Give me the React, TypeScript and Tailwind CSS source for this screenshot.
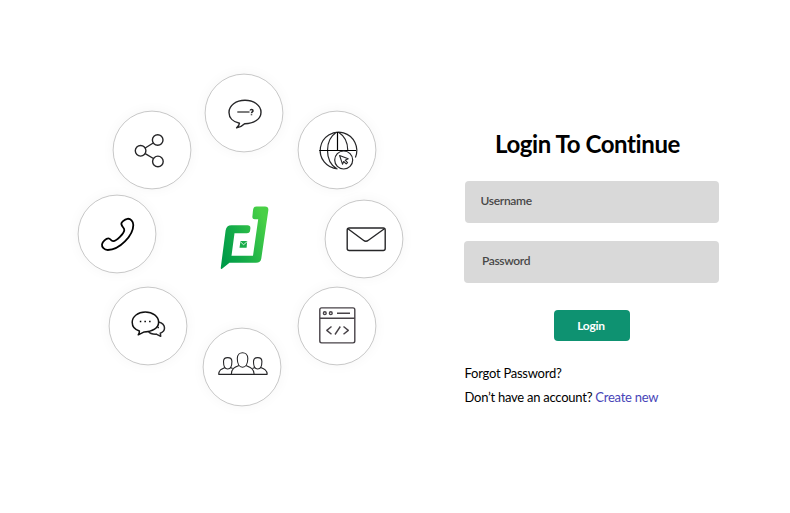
import type { ReactNode } from "react";

type Channel = { name: string; cx: number; cy: number; art: ReactNode };

const channels: Channel[] = [
  {
    name: "Question",
    cx: 244,
    cy: 113,
    art: (
      <>
        <path d="M239.5 123.2C233 122 229 117.700 229 112.400C229 105.500 236 100.300 245 100.300C254 100.300 261 105.500 261 112.200C261 119 254 123.800 244.600 123.700C242.300 126 239.600 127.300 236.600 127.900C238.300 126.500 239.300 125 239.500 123.200Z" />
        <path d="M237.300 112H249.500" stroke="#444" />
        <path d="M250.200 110.500C250.400 109 253 109 253 110.700C253 111.900 251.500 111.900 251.500 113.200M251.500 114.200V115.200" strokeWidth={1.5} />
      </>
    ),
  },
  {
    name: "Web",
    cx: 337,
    cy: 150,
    art: (
      <>
        <path d="M355.400 157.500A18.300 18.300 0 1 0 337.500 168.800M336.500 132.300C324.500 140 324.500 161 336.500 168.600M338.500 132.300C344.500 136 347.800 143 347.800 150.500" strokeWidth={1.2} />
        <path d="M337.500 132V150.500M319.200 150.500H356" stroke="#000" strokeWidth={1.2} />
        <circle cx="343.700" cy="160" r="9" fill="white" strokeWidth={1.2} />
        <path d="M339.600 155.500L348.200 158.800L345.200 160.200L347.600 162.600L346.200 163.900L343.700 161.500L342.500 164.200Z" strokeWidth={1.1} />
      </>
    ),
  },
  {
    name: "Share",
    cx: 152,
    cy: 149.500,
    art: (
      <>
        <circle cx="157.700" cy="139.500" r="5.300" />
        <circle cx="140.600" cy="150.300" r="5.300" />
        <circle cx="157.900" cy="160.900" r="5.300" />
        <path d="M145.200 147.500L153.200 142.500M145.200 153.100L153.400 158" />
      </>
    ),
  },
  {
    name: "Phone",
    cx: 117,
    cy: 234,
    art: (
      <path
        d="M121.500 224.500C120.600 222.700 124.500 219.200 127.500 218.800C130.500 218.500 133.300 221 133.300 225C133.300 235.500 119.500 250 107.800 250C104.200 250 101.600 247 102 244.300C102.500 241.700 106 238.300 108.400 238.300C110.800 238.300 110.700 241.300 113.200 241.200C116.600 241 124 233.600 124.300 230.200C124.500 227.600 122 227.200 121.500 224.500Z"
        stroke="#000"
        strokeWidth={1.8}
      />
    ),
  },
  {
    name: "Mail",
    cx: 364.400,
    cy: 239,
    art: (
      <>
        <rect x="347.600" y="228" width="38" height="22.500" rx="2" />
        <path d="M348.300 228.700L363.800 240.300Q366.300 242.300 368.800 240.300L384.800 228.700" />
      </>
    ),
  },
  {
    name: "Chat",
    cx: 148,
    cy: 326,
    art: (
      <>
        <path d="M158.500 322C162.300 323 164.500 325.200 164.500 328C164.500 330.300 162.800 332.200 160.300 333.200L160.700 336.300L156.300 334.100C152.500 334.300 149.800 333.300 148.300 331.200M157.500 327.500H159" strokeWidth={1.500} />
        <path d="M139.400 331C135 329.700 132.200 326.300 132.200 322.300C132.200 316.500 138 312 145.300 312C152.600 312 158.600 316.500 158.600 322.200C158.600 328 152.600 331.900 144.200 331.900L138.300 334.800C139.200 333.500 139.500 332.300 139.400 331Z" fill="white" stroke="#111" strokeWidth={1.500} />
        <path d="M139.800 321.500H141.300M144.400 321.500H145.900M149.100 321.500H150.600" stroke="#000" strokeWidth={1.700} />
      </>
    ),
  },
  {
    name: "Developer",
    cx: 337,
    cy: 326,
    art: (
      <g stroke="#484348">
        <rect x="319.800" y="307.900" width="35" height="35" rx="1.800" />
        <path d="M320 318.300H355M337 313.200H350" />
        <circle cx="324.800" cy="313.200" r="1.400" />
        <circle cx="330.800" cy="313.200" r="1.400" />
        <path d="M331.500 326.500L326.800 330.400L331.500 334.300M340.300 326.500L335 334.500M343.500 326.500L348.300 330.400L343.500 334.300" />
      </g>
    ),
  },
  {
    name: "Community",
    cx: 242.300,
    cy: 367,
    art: (
      <g strokeWidth={1.100}>
        <path d="M218.800 374.400H267.600" strokeWidth={1.400} />
        <path d="M237.600 358.500C237.600 350.800 248.100 350.800 248.100 358.500C248.100 363.500 246.100 367.200 242.800 367.200C239.600 367.200 237.600 363.500 237.600 358.500Z" />
        <path d="M231.600 374.400C231.800 368.500 234.800 367.300 239.300 365.500M246.300 365.500C250.800 367.300 254.300 368.500 254.500 374.400" />
        <path d="M223.800 361.500C223.800 356.300 232.200 356.300 232.200 361.500C232.200 366 230.500 369 228 369C225.500 369 223.800 366 223.800 361.500Z" />
        <path d="M253.800 361.500C253.800 356.300 262.200 356.300 262.200 361.500C262.200 366 260.500 369 258 369C255.500 369 253.800 366 253.800 361.500Z" />
        <path d="M219 374.400C219.200 370 221.800 369 225.200 367.500M230.600 367.500L233 368.500M252.800 368.500L255.300 367.500M260.700 367.500C264.500 369 267.300 370 267.500 374.400" />
      </g>
    ),
  },
];

function ChannelBubble({ name, cx, cy, art }: Channel) {
  return (
    <div
      className="absolute size-[78px] rounded-full bg-white shadow-[0_0_14px_rgba(0,0,0,0.045)]"
      style={{ left: cx - 39, top: cy - 39 }}
    >
      <svg
        aria-label={name}
        viewBox={`${cx - 39} ${cy - 39} 78 78`}
        className="size-full overflow-visible"
        fill="none"
        stroke="#262628"
        strokeWidth={1.4}
        strokeLinejoin="round"
      >
        <circle cx={cx} cy={cy} r="38.900" stroke="#a3a3a3" strokeWidth={0.6} />
        {art}
      </svg>
    </div>
  );
}

function Logo() {
  return (
    <svg viewBox="210 195 70 80" className="absolute left-[210px] top-[195px] h-20 w-[70px]">
      <defs>
        <linearGradient id="leaf" x1="220" y1="250" x2="269" y2="230" gradientUnits="userSpaceOnUse">
          <stop stopColor="#009b48" />
          <stop offset="0.4" stopColor="#16ad49" />
          <stop offset="1" stopColor="#49d046" />
        </linearGradient>
      </defs>
      <path
        fill="url(#leaf)"
        d="M256.500 206.500H265Q268.800 206.500 268.300 210.500L261.300 258.500Q260.600 262.800 256 262.800H229.500L222 268.800Q220.600 269.600 220.800 267.500L225.600 230.500Q226.400 225.300 231.500 225.300H247.500Q250.700 225.300 250.400 228.500L249.900 231.500Q249.500 233.300 247 233.300H234.500L231.500 255.700H253L258.200 219.300H254.800Q252 219.300 252.400 216.500L253 210.200Q253.400 206.500 256.500 206.500Z"
      />
      <path fill="#18ac49" d="M240.500 241H247.200L246.600 247.800H239.500Z" />
      <path fill="none" stroke="white" strokeWidth="0.8" d="M240.300 241.600L243.500 244.800L247.200 241.600" />
    </svg>
  );
}

export default function App() {
  return (
    <main className="flex h-[513px] w-[790px] overflow-hidden bg-white font-['Lato',sans-serif] text-black">
      <section className="relative w-[464px] shrink-0">
        {channels.map((channel) => (
          <ChannelBubble key={channel.name} {...channel} />
        ))}
        <Logo />
      </section>
      <form className="flex w-[255px] flex-col pt-[128px]" onSubmit={(event) => event.preventDefault()}>
        <h1 className="ml-[31px] h-8 whitespace-nowrap text-[24px] font-bold leading-8 tracking-[-0.4px]">Login To Continue</h1>
        <input
          aria-label="Username"
          placeholder="Username"
          className="ml-px mt-[21px] h-[42px] w-[254px] rounded bg-[#d9d9d9] pb-[3px] pl-[15.500px] text-[12px] font-semibold tracking-[-0.300px] outline-none placeholder:text-[#484848]"
        />
        <input
          aria-label="Password"
          placeholder="Password"
          className="mt-[18px] h-[42px] w-[255px] rounded bg-[#d9d9d9] pb-[3px] pl-[18px] text-[12px] font-semibold tracking-[-0.350px] outline-none placeholder:text-[#484848]"
        />
        <button className="ml-[90px] mt-[27px] h-[31px] w-[76px] rounded bg-[#0e9271] pr-[2px] text-[12px] font-bold tracking-[-0.250px] text-white">Login</button>
        <a className="ml-[0.500px] mt-[22px] h-5 whitespace-nowrap text-[13px] leading-5 tracking-[-0.250px]">Forgot Password?</a>
        <p className="ml-[0.500px] mt-1 whitespace-nowrap text-[13px] leading-5 tracking-[-0.250px]">
          <span>Don’t have an account?</span> <a className="text-[#4845b8]">Create new</a>
        </p>
      </form>
    </main>
  );
}
